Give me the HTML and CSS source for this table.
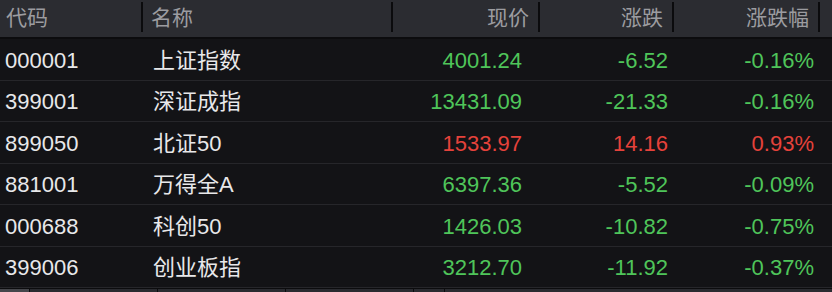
FILE: index.html
```html
<!DOCTYPE html>
<html lang="zh-CN">
<head>
<meta charset="utf-8">
<title>指数行情</title>
<link rel="stylesheet" href="styles.css">
</head>
<body>
<div class="table">
  <div class="head">
    <div class="hc c-code">代码</div>
    <div class="hc c-name">名称</div>
    <div class="hc c-price">现价</div>
    <div class="hc c-chg">涨跌</div>
    <div class="hc c-pct">涨跌幅</div>
    <div class="hc c-rest"></div>
  </div>
  <div class="row">
    <div class="c c-code">000001</div><div class="c c-name">上证指数</div>
    <div class="c c-price down">4001.24</div><div class="c c-chg down">-6.52</div><div class="c c-pct down">-0.16%</div><div class="c c-rest"></div>
  </div>
  <div class="row">
    <div class="c c-code">399001</div><div class="c c-name">深证成指</div>
    <div class="c c-price down">13431.09</div><div class="c c-chg down">-21.33</div><div class="c c-pct down">-0.16%</div><div class="c c-rest"></div>
  </div>
  <div class="row">
    <div class="c c-code">899050</div><div class="c c-name">北证50</div>
    <div class="c c-price up">1533.97</div><div class="c c-chg up">14.16</div><div class="c c-pct up">0.93%</div><div class="c c-rest"></div>
  </div>
  <div class="row">
    <div class="c c-code">881001</div><div class="c c-name">万得全A</div>
    <div class="c c-price down">6397.36</div><div class="c c-chg down">-5.52</div><div class="c c-pct down">-0.09%</div><div class="c c-rest"></div>
  </div>
  <div class="row">
    <div class="c c-code">000688</div><div class="c c-name">科创50</div>
    <div class="c c-price down">1426.03</div><div class="c c-chg down">-10.82</div><div class="c c-pct down">-0.75%</div><div class="c c-rest"></div>
  </div>
  <div class="row">
    <div class="c c-code">399006</div><div class="c c-name">创业板指</div>
    <div class="c c-price down">3212.70</div><div class="c c-chg down">-11.92</div><div class="c c-pct down">-0.37%</div><div class="c c-rest"></div>
  </div>
  <div class="strip">
    <div class="seg seg-a"></div>
    <div class="seg seg-b"></div>
    <div class="seg seg-b"></div>
    <div class="seg seg-b"></div>
    <div class="seg seg-c"></div>
    <div class="seg seg-d"></div>
  </div>
</div>
</body>
</html>
```
FILE: styles.css
```css
html, body {
  margin: 0;
  padding: 0;
  background: #131316;
}
body {
  width: 832px;
  height: 292px;
  overflow: hidden;
  font-family: "Liberation Sans", "Noto Sans CJK SC", sans-serif;
}
.table {
  display: flex;
  flex-direction: column;
}
.head, .row {
  display: grid;
  grid-template-columns: 143px 250px 147px 134px 146px 12px;
}
.head {
  height: 37px;
  background: #2b2c31;
  border-bottom: 2px solid #0c0c0e;
  align-items: start;
}
.hc {
  height: 30px;
  margin-top: 2px;
  border-right: 2px solid #0b0b0d;
  color: #9c9ca0;
  font-size: 21px;
  line-height: 32px;
  white-space: nowrap;
}
.hc.c-rest { border-right: none; }
.hc.c-code { padding-left: 6px; }
.hc.c-name { padding-left: 8px; }
.hc.c-price, .hc.c-chg, .hc.c-pct { text-align: right; padding-right: 9px; }
.row {
  height: 37.5px;
  border-bottom: 1px solid #26262a;
  align-items: center;
  padding-top: 3px;
  box-sizing: content-box;
}
.c {
  font-size: 22px;
  line-height: 26px;
  color: #e8e8ea;
  white-space: nowrap;
}
.c.c-code { padding-left: 5px; }
.c.c-name { padding-left: 10px; }
.c.c-price { text-align: right; padding-right: 18px; }
.c.c-chg { text-align: right; padding-right: 6px; }
.c.c-pct { text-align: right; padding-right: 6px; }
.down { color: #4fc55a; }
.up { color: #e5423b; }
.strip {
  display: flex;
  height: 6px;
  background: #0c0c0e;
}
.seg {
  height: 6px;
  margin-top: 1px;
  margin-right: 1px;
  background: #2a2b30;
}
.seg-a { width: 29px; background: #45464b; }
.seg-b { width: 127px; }
.seg-c { width: 30px; }
.seg-d { flex: 1; margin-right: 0; }
```
